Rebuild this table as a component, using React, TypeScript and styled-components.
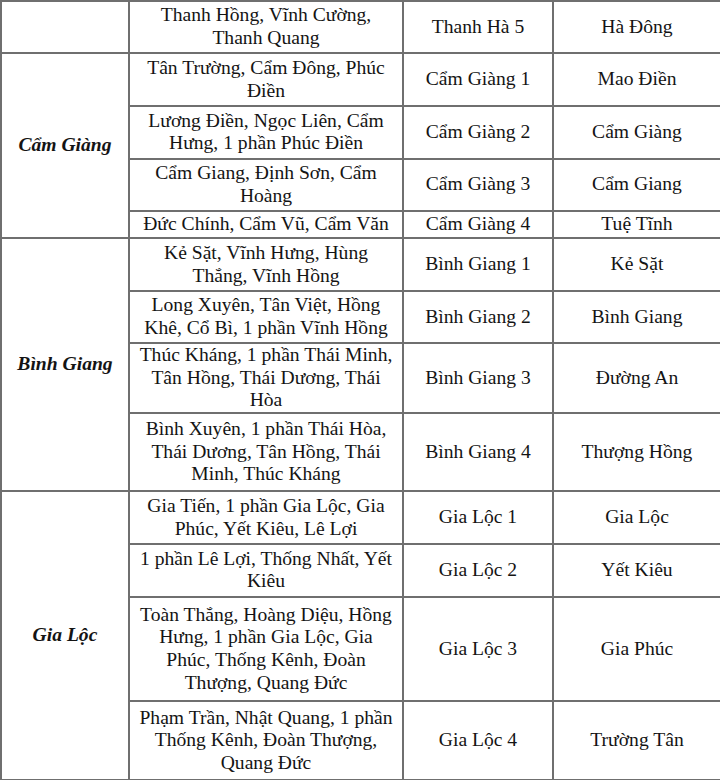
import styled, { createGlobalStyle } from "styled-components";

type Unit = {
  communes: string;
  name: string;
  center: string;
  height: number;
};

type District = {
  district: string;
  units: Unit[];
};

const data: District[] = [
  {
    district: "",
    units: [
      { communes: "Thanh Hồng, Vĩnh Cường, Thanh Quang", name: "Thanh Hà 5", center: "Hà Đông", height: 52 },
    ],
  },
  {
    district: "Cẩm Giàng",
    units: [
      { communes: "Tân Trường, Cẩm Đông, Phúc Điền", name: "Cẩm Giàng 1", center: "Mao Điền", height: 53 },
      { communes: "Lương Điền, Ngọc Liên, Cẩm Hưng, 1 phần Phúc Điền", name: "Cẩm Giàng 2", center: "Cẩm Giàng", height: 52.5 },
      { communes: "Cẩm Giang, Định Sơn, Cẩm Hoàng", name: "Cẩm Giàng 3", center: "Cẩm Giang", height: 52.5 },
      { communes: "Đức Chính, Cẩm Vũ, Cẩm Văn", name: "Cẩm Giàng 4", center: "Tuệ Tĩnh", height: 27 },
    ],
  },
  {
    district: "Bình Giang",
    units: [
      { communes: "Kẻ Sặt, Vĩnh Hưng, Hùng Thắng, Vĩnh Hồng", name: "Bình Giang 1", center: "Kẻ Sặt", height: 53 },
      { communes: "Long Xuyên, Tân Việt, Hồng Khê, Cổ Bì, 1 phần Vĩnh Hồng", name: "Bình Giang 2", center: "Bình Giang", height: 52 },
      { communes: "Thúc Kháng, 1 phần Thái Minh, Tân Hồng, Thái Dương, Thái Hòa", name: "Bình Giang 3", center: "Đường An", height: 69.5 },
      { communes: "Bình Xuyên, 1 phần Thái Hòa, Thái Dương, Tân Hồng, Thái Minh, Thúc Kháng", name: "Bình Giang 4", center: "Thượng Hồng", height: 78.5 },
    ],
  },
  {
    district: "Gia Lộc",
    units: [
      { communes: "Gia Tiến, 1 phần Gia Lộc, Gia Phúc, Yết Kiêu, Lê Lợi", name: "Gia Lộc 1", center: "Gia Lộc", height: 52.5 },
      { communes: "1 phần Lê Lợi, Thống Nhất, Yết Kiêu", name: "Gia Lộc 2", center: "Yết Kiêu", height: 53 },
      { communes: "Toàn Thắng, Hoàng Diệu, Hồng Hưng, 1 phần Gia Lộc, Gia Phúc, Thống Kênh, Đoàn Thượng, Quang Đức", name: "Gia Lộc 3", center: "Gia Phúc", height: 104.5 },
      { communes: "Phạm Trần, Nhật Quang, 1 phần Thống Kênh, Đoàn Thượng, Quang Đức", name: "Gia Lộc 4", center: "Trường Tân", height: 78.5 },
    ],
  },
];

const GlobalStyle = createGlobalStyle`
  html, body {
    margin: 0;
    padding: 0;
    background: #ffffff;
  }
  body {
    font-family: "Liberation Serif", "Times New Roman", serif;
    color: #141414;
  }
`;

const Table = styled.table`
  width: 720px;
  border-collapse: collapse;
  table-layout: fixed;
  font-size: 19.6px;
  line-height: 22.6px;
`;

const Col = styled.col<{ $w: number }>`
  width: ${(p) => p.$w}px;
`;

const Row = styled.tr<{ $h: number }>`
  height: ${(p) => p.$h}px;
`;

const Cell = styled.td`
  border: 2px solid #6f6f6f;
  padding: 0 7px;
  text-align: center;
  vertical-align: middle;
`;

const DistrictCell = styled(Cell)`
  font-weight: bold;
  font-style: italic;
  padding: 0 4px;
`;

const App = () => {
  return (
    <>
      <GlobalStyle />
      <Table>
        <colgroup>
          <Col $w={128} />
          <Col $w={274} />
          <Col $w={150} />
          <Col $w={168} />
        </colgroup>
        <tbody>
          {data.map((d) =>
            d.units.map((u, i) => (
              <Row key={u.name} $h={u.height}>
                {i === 0 && (
                  <DistrictCell rowSpan={d.units.length}>{d.district}</DistrictCell>
                )}
                <Cell>{u.communes}</Cell>
                <Cell>{u.name}</Cell>
                <Cell>{u.center}</Cell>
              </Row>
            ))
          )}
        </tbody>
      </Table>
    </>
  );
};

export default App;
